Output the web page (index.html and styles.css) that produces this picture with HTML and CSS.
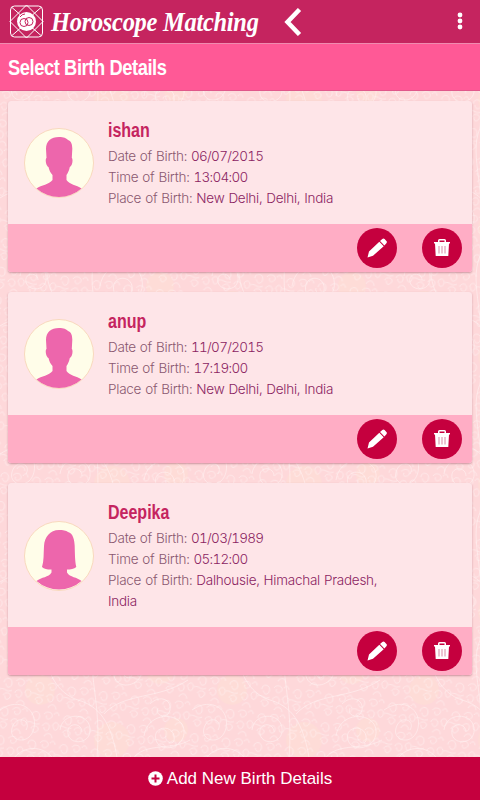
FILE: index.html
```html
<!DOCTYPE html>
<html lang="en">
<head>
    <meta charset="UTF-8">
    <meta name="viewport" content="width=device-width, initial-scale=1.0">
    <title>Horoscope Matching</title>
    <link rel="stylesheet" href="styles.css">
</head>
<body>
    <svg class="pattern" width="480" height="800">
        <defs>
            <pattern id="lace" width="192" height="128" patternUnits="userSpaceOnUse">
                <g fill="#ffe0d2" opacity="0.4">
                    <circle cx="40" cy="50" r="15"/>
                    <circle cx="112" cy="100" r="18"/>
                    <circle cx="160" cy="30" r="14"/>
                    <circle cx="176" cy="90" r="12"/>
                </g>
                <g fill="none" stroke="#fff1f2" stroke-opacity="0.6">
                    <path d="M96 0c-12 30 8 60 0 128M48 0c-6 30 10 54 30 60s34 20 40 64M0 70c20-14 38 0 34 18s-26 14-22 0 20-8 14 2"/>
                    <path d="M100 30c4-26 38-28 42-6s-24 28-28 12 16-18 18-6-10 8-8 2M144 96c4-26 38-24 40-6s-24 24-28 10 16-16 18-4-10 6-8 0"/>
                    <path d="M60 90c2-18 28-18 30-2s-20 18-22 6 14-12 14-2M20 20c2-16 24-16 26 0s-18 16-20 6 12-10 12-2M104 74c20-22 54-14 84-34"/>
                    <path d="M10 124c10-20 34-20 44-4M130 124c10-24 40-12 60-24M150 64c10-10 22-4 20 6s-16 6-12-2"/>
                </g>
            </pattern>
            <pattern id="curls" width="32" height="29" patternUnits="userSpaceOnUse" patternTransform="rotate(8)">
                <g fill="none" stroke="#fff1f2" stroke-opacity="0.6">
                    <path d="M3 8c0-6 8-6 8 0s-6 5-6 1M15 5c3-5 10-2 8 2s-7 2-5-1M25 16c0-6 7-5 6 0s-5 4-5 0"/>
                    <path d="M4 21c1-5 9-3 7 1s-6 3-5-1M15 17c1-5 8-4 7 1s-6 3-5 0M18 27c2-5 8-4 8 1M25 4c1-3 5-3 5 1M0 15c4-2 7 3 12 0"/>
                </g>
            </pattern>
            <symbol id="male" viewBox="0 0 70 70">
                <circle cx="35" cy="35" r="34.5" fill="#fffde9" stroke="#f8d9bd"/>
                <path fill="#ed66ac" d="M35 9c5 0 7 1 9 3 3.500 1 4.400 5 4.300 9l-.5 9c1.500 1 .6 8-2 9-.6 3.500-2 6-3.300 8v5c3 4.500 10 5 15 8.500a34 34 0 0 1-45 0c5-3.500 12.500-4 16-8.500v-5c-2-2-3.300-5-4-8-2.500-1-3.600-8-2-9l-.5-9c0-8 5-12 13-12z"/>
            </symbol>
            <symbol id="female" viewBox="0 0 70 70">
                <circle cx="35" cy="35" r="34.5" fill="#fffde9" stroke="#f8d9bd"/>
                <path fill="#ed66ac" d="M35 9c4 0 7 .5 9 2 5 1 6.500 8 6.700 14 .2 8 .3 16 1.600 21-2 2-6 2.500-9.300 2.500v3c3 5 10 4.500 14.500 8.500a34 34 0 0 1-45 0c5-4 12-3.500 15-8.500v-3c-3 .2-7.500-.5-9.500-2.500 2-6 1.500-13 2-21 .5-9 6-16 15-16z"/>
            </symbol>
            <symbol id="pencil" viewBox="0 0 20 20">
                <path fill="#fff" d="M.5 19.500l1.500-6L12.300 3.700l4.400 4.500L6 17.800zM13 3l2.300-2.100q1.200-.9 2.300.1l1.800 1.900q1 1.200 0 2.300l-2 2.200z"/>
            </symbol>
            <symbol id="trash" viewBox="0 0 16 18">
                <path fill="#fff" d="M0 3h4V1.500Q4 0 5.500 0h5Q12 0 12 1.500V3h4v1.500h-1L14.300 17H1.700L1 4.500H0zM5.500 3h5V1.500h-5z"/>
                <path stroke="#d98aa5" d="M5 7v7.500M8 7v7.500M11 7v7.500"/>
            </symbol>
        </defs>
        <rect width="480" height="800" fill="url(#lace)"/>
        <rect width="480" height="800" fill="url(#curls)"/>
    </svg>

    <div class="page">
        <header class="topbar">
            <svg class="logo" width="36" height="36" viewBox="0 0 36 36" fill="none" stroke="#fff">
                <rect x="1.500" y="2" width="32" height="31" rx="4"/>
                <path d="M17.500 1L1 17.500l16.500 16.500L34 17.500zM3 3.500l8 7M32 3.500l-8 7M3 31.500l8-7M32 31.500l-8-7"/>
                <circle cx="17.500" cy="17.500" r="9.500" fill="#fff" stroke="none"/>
                <g stroke="#c5245f">
                    <circle cx="15" cy="18.500" r="4"/>
                    <circle cx="20" cy="17.500" r="4"/>
                    <path d="M11 13q2-3 5-3"/>
                </g>
            </svg>
            <h1><span>Horoscope Matching</span></h1>
            <svg class="back" width="18" height="28" viewBox="0 0 18 28" fill="none" stroke="#fff" stroke-width="4.500">
                <path d="M15.500 1.500L3.500 14l12 12.500"/>
            </svg>
            <svg class="more" width="6" height="18" viewBox="0 0 6 18" fill="#fff">
                <circle cx="3" cy="3" r="2.400"/>
                <circle cx="3" cy="9" r="2.400"/>
                <circle cx="3" cy="15" r="2.400"/>
            </svg>
        </header>
        <h2 class="subbar"><span>Select Birth Details</span></h2>

        <main class="list">
            <section class="card">
                <div class="info">
                    <svg class="avatar"><use href="#male"/></svg>
                    <div class="details">
                        <h3>ishan</h3>
                        <p>Date of Birth: <span class="num">06/07/2015</span></p>
                        <p>Time of Birth: <span class="num">13:04:00</span></p>
                        <p>Place of Birth: <span>New Delhi, Delhi, India</span></p>
                    </div>
                </div>
                <div class="actions">
                    <button aria-label="Edit"><svg width="20" height="20"><use href="#pencil"/></svg></button>
                    <button aria-label="Delete"><svg width="16" height="18"><use href="#trash"/></svg></button>
                </div>
            </section>

            <section class="card">
                <div class="info">
                    <svg class="avatar"><use href="#male"/></svg>
                    <div class="details">
                        <h3>anup</h3>
                        <p>Date of Birth: <span class="num">11/07/2015</span></p>
                        <p>Time of Birth: <span class="num">17:19:00</span></p>
                        <p>Place of Birth: <span>New Delhi, Delhi, India</span></p>
                    </div>
                </div>
                <div class="actions">
                    <button aria-label="Edit"><svg width="20" height="20"><use href="#pencil"/></svg></button>
                    <button aria-label="Delete"><svg width="16" height="18"><use href="#trash"/></svg></button>
                </div>
            </section>

            <section class="card">
                <div class="info">
                    <svg class="avatar"><use href="#female"/></svg>
                    <div class="details">
                        <h3>Deepika</h3>
                        <p>Date of Birth: <span class="num">01/03/1989</span></p>
                        <p>Time of Birth: <span class="num">05:12:00</span></p>
                        <p>Place of Birth: <span>Dalhousie, Himachal Pradesh,</span> <span>India</span></p>
                    </div>
                </div>
                <div class="actions">
                    <button aria-label="Edit"><svg width="20" height="20"><use href="#pencil"/></svg></button>
                    <button aria-label="Delete"><svg width="16" height="18"><use href="#trash"/></svg></button>
                </div>
            </section>
        </main>

        <footer class="add">
            <svg width="15" height="15" viewBox="0 0 15 15">
                <circle cx="7.500" cy="7.500" r="7.300" fill="#fff"/>
                <path d="M7.500 3.500v8M3.500 7.500h8" stroke="#c5003e" stroke-width="2"/>
            </svg>
            <span>Add New Birth Details</span>
        </footer>
    </div>
</body>
</html>
```
FILE: styles.css
```css
* {
    box-sizing: border-box;
}
body {
    margin: 0;
    background: #fed8da;
    font-family: Inter, "Liberation Sans", sans-serif;
}
h1, h2, h3, p {
    margin: 0;
}
/* lace background sits behind the whole page */
.pattern {
    position: absolute;
    top: 0;
    left: 0;
    z-index: -1;
}
.page {
    display: flex;
    flex-direction: column;
    height: 800px;
}
.topbar {
    display: flex;
    align-items: center;
    height: 44px;
    padding: 0 17px 0 9px;
    background: #c5245f;
    border-bottom: 1px solid #f08bb0;
    color: #fff;
}
.topbar h1 {
    width: 233px;
    margin-left: 6px;
    font: italic bold 27px/42px "Liberation Serif", serif;
    letter-spacing: -0.3px;
    white-space: nowrap;
}
/* condensed headings */
.topbar h1 span,
.subbar span {
    display: inline-block;
    transform: scaleX(0.905);
    transform-origin: left;
}
.more {
    margin: 0 0 2px auto;
}
.subbar {
    height: 47px;
    padding-left: 8px;
    background: #ff5996;
    border-bottom: 1px solid #e0588b;
    color: #fff;
    font: bold 22px/47px "Liberation Sans", sans-serif;
    letter-spacing: -0.5px;
}
.subbar span {
    transform: scaleX(0.832);
}
.list {
    flex: 1;
    padding: 10px 8px 0;
}
.card {
    margin-bottom: 20px;
    border-radius: 3px;
    overflow: hidden;
    background: #fee5e8;
    box-shadow: 0 1px 2px rgba(130, 50, 70, 0.4);
}
.info {
    display: flex;
    align-items: center;
    padding: 17px 16px 15px;
}
.avatar {
    width: 70px;
    height: 70px;
    margin-top: -1px;
}
.details {
    width: 275px;
    margin-left: 14px;
    color: #8a5870;
    font-size: 13.5px;
    font-weight: 300;
    font-variant-numeric: tabular-nums;
    line-height: 21px;
    letter-spacing: -0.25px;
    word-spacing: 0.6px;
}
.details h3 {
    height: 28px;
    color: #c5245f;
    font: bold 20px/25px "Liberation Sans", sans-serif;
    letter-spacing: 0;
    transform: scaleX(0.8);
    transform-origin: left;
}
.details span {
    color: #8b2462;
}
.details .num {
    letter-spacing: -0.7px;
}
.actions {
    display: flex;
    justify-content: flex-end;
    align-items: center;
    gap: 25px;
    height: 48px;
    padding-right: 10px;
    background: #ffadc5;
}
.actions button {
    display: flex;
    align-items: center;
    justify-content: center;
    width: 40px;
    height: 40px;
    padding: 0;
    border: none;
    border-radius: 50%;
    background: #c5003e;
}
.add {
    display: flex;
    align-items: center;
    justify-content: center;
    gap: 4px;
    height: 43px;
    background: #c5003e;
    color: #fff;
    font: 17px "Liberation Sans", sans-serif;
}
```
